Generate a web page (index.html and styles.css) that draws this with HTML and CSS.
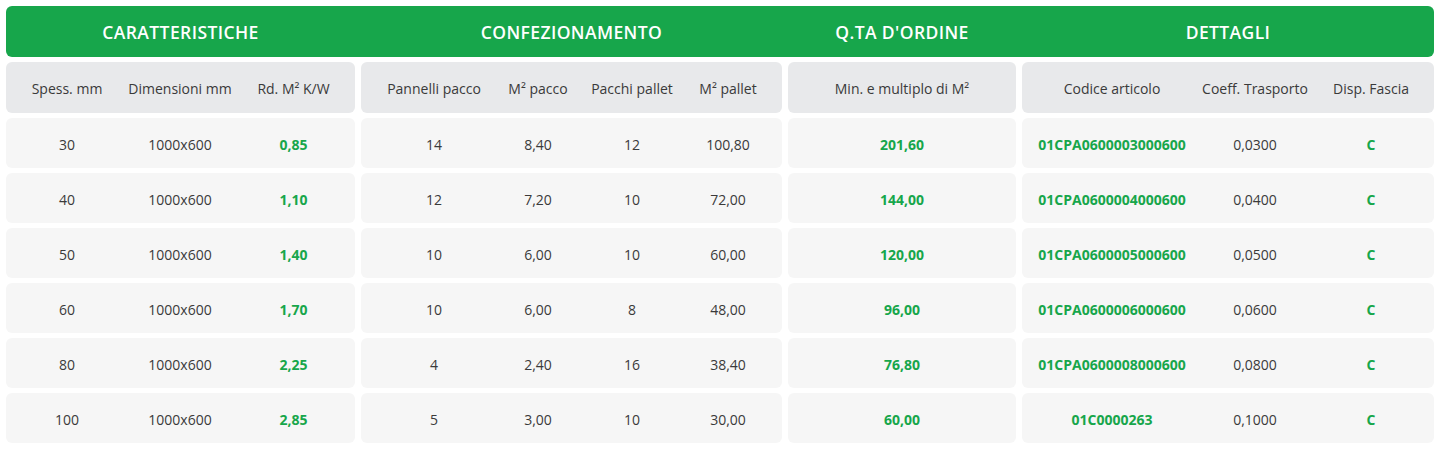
FILE: index.html
```html
<!DOCTYPE html>
<html lang="it">
<head>
  <meta charset="UTF-8">
  <title>Tabella pannelli</title>
  <link rel="stylesheet" href="styles.css">
</head>
<body>

  <div class="tabella">

    <!-- TITOLI -->
    <div class="riga titoli">
      <div class="titolo">CARATTERISTICHE</div>
      <div class="titolo">CONFEZIONAMENTO</div>
      <div class="titolo">Q.TA D'ORDINE</div>
      <div class="titolo">DETTAGLI</div>
    </div>

    <!-- INTESTAZIONI -->
    <div class="riga intestazione">
      <div class="box g1"><span>Spess. mm</span><span>Dimensioni mm</span><span>Rd. M² K/W</span></div>
      <div class="box g2"><span>Pannelli pacco</span><span>M² pacco</span><span>Pacchi pallet</span><span>M² pallet</span></div>
      <div class="box g3"><span>Min. e multiplo di M²</span></div>
      <div class="box g4"><span>Codice articolo</span><span>Coeff. Trasporto</span><span>Disp. Fascia</span></div>
    </div>

    <div id="righe"></div>

  </div>

  <script>
    // Dati tabella
    const dati = [
      ["30", "1000x600", "0,85", "14", "8,40", "12", "100,80", "201,60", "01CPA0600003000600", "0,0300", "C"],
      ["40", "1000x600", "1,10", "12", "7,20", "10", "72,00", "144,00", "01CPA0600004000600", "0,0400", "C"],
      ["50", "1000x600", "1,40", "10", "6,00", "10", "60,00", "120,00", "01CPA0600005000600", "0,0500", "C"],
      ["60", "1000x600", "1,70", "10", "6,00", "8", "48,00", "96,00", "01CPA0600006000600", "0,0600", "C"],
      ["80", "1000x600", "2,25", "4", "2,40", "16", "38,40", "76,80", "01CPA0600008000600", "0,0800", "C"],
      ["100", "1000x600", "2,85", "5", "3,00", "10", "30,00", "60,00", "01C0000263", "0,1000", "C"]
    ];

    const gruppi = [[0, 3, "g1"], [3, 7, "g2"], [7, 8, "g3"], [8, 11, "g4"]];
    const verdi = [2, 7, 8, 10];

    const contenitore = document.getElementById("righe");
    dati.forEach(r => {
      const riga = document.createElement("div");
      riga.className = "riga dati";
      gruppi.forEach(([da, a, cls]) => {
        const box = document.createElement("div");
        box.className = "box " + cls;
        for (let i = da; i < a; i++) {
          const s = document.createElement("span");
          s.innerText = r[i];
          if (verdi.includes(i)) s.classList.add("verde");
          box.appendChild(s);
        }
        riga.appendChild(box);
      });
      contenitore.appendChild(riga);
    });
  </script>

</body>
</html>
```

FILE: styles.css
```css
body {
  margin: 0;
  padding: 6px;
  background: #fff;
  font-family: 'Open Sans', sans-serif;
  color: #3a3a3a;
}

.riga {
  display: grid;
  grid-template-columns: 349px 421px 228px 412px;
  gap: 6px;
  margin-bottom: 5px;
}

/* TITOLI VERDI */
.titoli {
  background-color: #17a64b;
  border-radius: 6px;
  height: 51px;
}

.titolo {
  display: flex;
  align-items: center;
  justify-content: center;
  color: white;
  font-size: 17.5px;
  font-weight: 600;
  letter-spacing: 0.4px;
}

/* BOX */
.box {
  display: grid;
  align-items: center;
  text-align: center;
  height: 50px;
  border-radius: 6px;
  font-size: 14px;
}

.intestazione .box {
  height: 51px;
  padding-top: 1px;
  box-sizing: border-box;
  background-color: #e8e9eb;
}

.dati .box {
  padding-top: 3px;
  box-sizing: border-box;
  background-color: #f6f6f6;
}

.g1 {
  grid-template-columns: 122px 104px 123px;
}

.g2 {
  grid-template-columns: 104px 104px 84px 108px;
  padding-left: 21px;
}

.g3 {
  grid-template-columns: 1fr;
}

.g4 {
  grid-template-columns: 180px 106px 126px;
}

.verde {
  color: #17a64b;
  font-weight: 700;
}
```
